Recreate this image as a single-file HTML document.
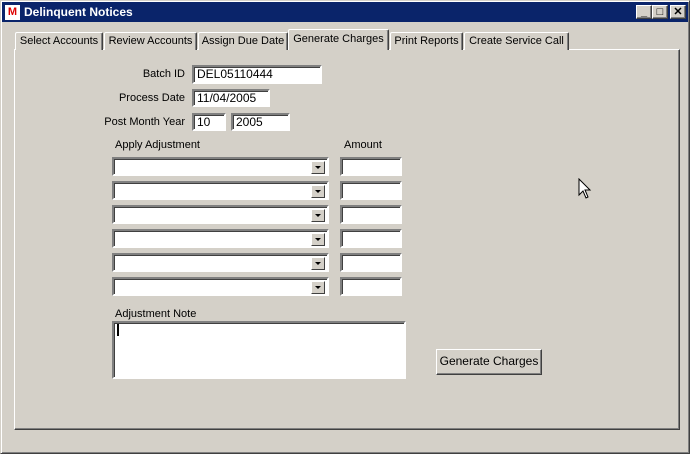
<!DOCTYPE html>
<html><head><style>
*{box-sizing:border-box}
body{margin:0;width:690px;height:454px;background:#d4d0c8;font-family:"Liberation Sans",sans-serif;font-size:11px;color:#000;position:relative;overflow:hidden}
.a{position:absolute}
.win{left:0;top:0;width:690px;height:454px;border:1px solid;border-color:#d4d0c8 #404040 #404040 #d4d0c8;box-shadow:inset 1px 1px #fff,inset -1px -1px #808080}
.title{left:2px;top:2px;width:686px;height:20px;background:#0a246a;color:#fff;font-weight:bold;font-size:12px;line-height:20px;padding-left:22px}
.tb{top:5px;width:16px;height:14px;background:#d4d0c8;border:1px solid;border-color:#fff #404040 #404040 #fff;box-shadow:inset -1px -1px #808080;color:#000;font-size:11px;line-height:12px;text-align:center;font-weight:bold}
.panel{left:14px;top:49px;width:666px;height:381px;border:1px solid;border-color:#fff #404040 #404040 #fff;box-shadow:inset -1px -1px #808080}
.tab{top:32px;height:18px;border:1px solid;border-bottom:none;border-color:#fff #404040 #404040 #fff;box-shadow:inset -1px 0 #808080;border-radius:2px 2px 0 0;line-height:17px;text-align:center;background:#d4d0c8}
.tab.act{top:29px;height:21px;z-index:2;line-height:19px}
.in{background:#fff;border:2px solid;border-color:#808080 #fff #fff #808080;box-shadow:inset 1px 1px #404040;padding:1px 3px;line-height:13px;font-size:12px}
.lbl{text-align:right;line-height:16px}
.dd{position:absolute;right:2px;top:2px;width:14px;height:13px;background:#d4d0c8;border:1px solid;border-color:#fff #404040 #404040 #fff}
.dd:after{content:"";position:absolute;left:3px;top:4px;border:3px solid transparent;border-top:3px solid #000;border-bottom:none}
.btn{left:436px;top:349px;width:106px;height:26px;border:1px solid;border-color:#fff #404040 #404040 #fff;box-shadow:inset -1px -1px #808080;text-align:center;line-height:23px;font-size:12px}
</style></head><body>
<div class="a win"></div>
<div class="a title">Delinquent Notices</div>
<div class="a" style="left:5px;top:5px;width:15px;height:15px;background:#fff;color:#d00;font-weight:bold;font-size:11px;line-height:15px;text-align:center">M</div>
<div class="a tb" style="left:636px">_</div>
<div class="a tb" style="left:652px">□</div>
<div class="a tb" style="left:670px">✕</div>
<div class="a panel"></div>
<div class="a tab" style="left:15px;width:88px">Select Accounts</div>
<div class="a tab" style="left:104px;width:93px">Review Accounts</div>
<div class="a tab" style="left:198px;width:90px">Assign Due Date</div>
<div class="a tab act" style="left:288px;width:101px">Generate Charges</div>
<div class="a tab" style="left:390px;width:73px">Print Reports</div>
<div class="a tab" style="left:464px;width:105px">Create Service Call</div>

<div class="a lbl" style="left:100px;top:66px;width:85px">Batch ID</div>
<div class="a in" style="left:192px;top:65px;width:130px;height:19px">DEL05110444</div>
<div class="a lbl" style="left:80px;top:90px;width:105px">Process Date</div>
<div class="a in" style="left:192px;top:89px;width:78px;height:18px">11/04/2005</div>
<div class="a lbl" style="left:80px;top:114px;width:105px">Post Month Year</div>
<div class="a in" style="left:192px;top:113px;width:34px;height:18px">10</div>
<div class="a in" style="left:231px;top:113px;width:59px;height:18px">2005</div>
<div class="a" style="left:115px;top:139px">Apply Adjustment</div>
<div class="a" style="left:344px;top:139px">Amount</div>

<div class="a in" style="left:112px;top:157px;width:217px;height:19px"><div class="dd"></div></div>
<div class="a in" style="left:340px;top:157px;width:62px;height:19px"></div>
<div class="a in" style="left:112px;top:181px;width:217px;height:19px"><div class="dd"></div></div>
<div class="a in" style="left:340px;top:181px;width:62px;height:19px"></div>
<div class="a in" style="left:112px;top:205px;width:217px;height:19px"><div class="dd"></div></div>
<div class="a in" style="left:340px;top:205px;width:62px;height:19px"></div>
<div class="a in" style="left:112px;top:229px;width:217px;height:19px"><div class="dd"></div></div>
<div class="a in" style="left:340px;top:229px;width:62px;height:19px"></div>
<div class="a in" style="left:112px;top:253px;width:217px;height:19px"><div class="dd"></div></div>
<div class="a in" style="left:340px;top:253px;width:62px;height:19px"></div>
<div class="a in" style="left:112px;top:277px;width:217px;height:19px"><div class="dd"></div></div>
<div class="a in" style="left:340px;top:277px;width:62px;height:19px"></div>

<div class="a" style="left:115px;top:308px">Adjustment Note</div>
<div class="a in" style="left:112px;top:321px;width:294px;height:58px"><div style="width:2px;height:12px;background:#000"></div></div>
<div class="a btn">Generate Charges</div>
<svg class="a" style="left:578px;top:178px" width="14" height="22" viewBox="0 0 14 22"><path d="M1 1V17L5 13L8 20L10 19L7 12H12Z" fill="#fff" stroke="#000" stroke-width="1"/></svg>
</body></html>
